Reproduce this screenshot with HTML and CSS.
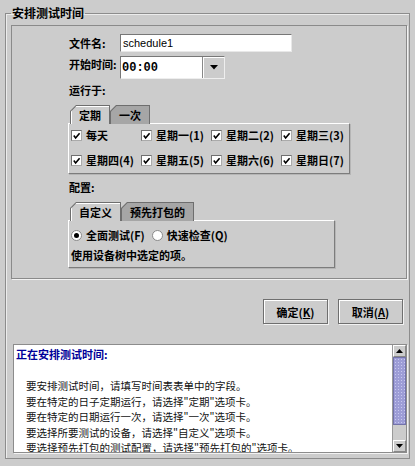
FILE: index.html
```html
<!DOCTYPE html>
<html lang="zh-CN">

<head>
    <meta charset="UTF-8">
    <title>安排测试时间</title>
    <link rel="stylesheet" href="styles.css">
</head>

<body>
    <fieldset class="group">
        <legend>安排测试时间</legend>

        <div class="main">
            <div class="form">
                <div class="row">
                    <label class="label" for="fileName">文件名:</label>
                    <input id="fileName" class="text-field" type="text" value="schedule1">
                </div>
                <div class="row row-time">
                    <label class="label">开始时间:</label>
                    <div class="combo">
                        <span class="combo-value">00:00</span>
                        <span class="combo-button">
                            <svg width="8" height="5" viewBox="0 0 8 5"><path d="M0 0 H8 L4 4.5 Z" fill="#000"/></svg>
                        </span>
                    </div>
                </div>

                <div class="section-label">运行于:</div>
                <div class="tabs">
                    <div class="tab selected"><div class="tab-face">定期</div></div>
                    <div class="tab"><div class="tab-face">一次</div></div>
                </div>
                <div class="tab-panel days">
                    <div class="check-item"><span class="check"><svg width="9" height="9" viewBox="0 0 9 9"><path d="M1.8 4.6 L3.6 7 L7.6 2.2" fill="none" stroke="#000" stroke-width="1.6"/></svg></span>每天</div>
                    <div class="check-item"><span class="check"><svg width="9" height="9" viewBox="0 0 9 9"><path d="M1.8 4.6 L3.6 7 L7.6 2.2" fill="none" stroke="#000" stroke-width="1.6"/></svg></span>星期一(1)</div>
                    <div class="check-item"><span class="check"><svg width="9" height="9" viewBox="0 0 9 9"><path d="M1.8 4.6 L3.6 7 L7.6 2.2" fill="none" stroke="#000" stroke-width="1.6"/></svg></span>星期二(2)</div>
                    <div class="check-item"><span class="check"><svg width="9" height="9" viewBox="0 0 9 9"><path d="M1.8 4.6 L3.6 7 L7.6 2.2" fill="none" stroke="#000" stroke-width="1.6"/></svg></span>星期三(3)</div>
                    <div class="check-item"><span class="check"><svg width="9" height="9" viewBox="0 0 9 9"><path d="M1.8 4.6 L3.6 7 L7.6 2.2" fill="none" stroke="#000" stroke-width="1.6"/></svg></span>星期四(4)</div>
                    <div class="check-item"><span class="check"><svg width="9" height="9" viewBox="0 0 9 9"><path d="M1.8 4.6 L3.6 7 L7.6 2.2" fill="none" stroke="#000" stroke-width="1.6"/></svg></span>星期五(5)</div>
                    <div class="check-item"><span class="check"><svg width="9" height="9" viewBox="0 0 9 9"><path d="M1.8 4.6 L3.6 7 L7.6 2.2" fill="none" stroke="#000" stroke-width="1.6"/></svg></span>星期六(6)</div>
                    <div class="check-item"><span class="check"><svg width="9" height="9" viewBox="0 0 9 9"><path d="M1.8 4.6 L3.6 7 L7.6 2.2" fill="none" stroke="#000" stroke-width="1.6"/></svg></span>星期日(7)</div>
                </div>

                <div class="section-label section-config">配置:</div>
                <div class="tabs">
                    <div class="tab selected"><div class="tab-face">自定义</div></div>
                    <div class="tab"><div class="tab-face">预先打包的</div></div>
                </div>
                <div class="tab-panel config">
                    <div class="radio-row">
                        <div class="radio-item"><span class="radio on"></span>全面测试(F)</div>
                        <div class="radio-item"><span class="radio"></span>快速检查(Q)</div>
                    </div>
                    <div class="config-note">使用设备树中选定的项。</div>
                </div>
            </div>
        </div>

        <div class="buttons">
            <button type="button" class="button">确定(<u>K</u>)</button>
            <button type="button" class="button">取消(<u>A</u>)</button>
        </div>

        <div class="help">
            <div class="help-text">
                <p class="help-title">正在安排测试时间:</p>
                <p>&nbsp;</p>
                <p class="help-line">要安排测试时间，请填写时间表表单中的字段。</p>
                <p class="help-line">要在特定的日子定期运行，请选择"定期"选项卡。</p>
                <p class="help-line">要在特定的日期运行一次，请选择"一次"选项卡。</p>
                <p class="help-line">要选择所要测试的设备，请选择"自定义"选项卡。</p>
                <p class="help-line">要选择预先打包的测试配置，请选择"预先打包的"选项卡。</p>
            </div>
            <div class="scrollbar">
                <div class="scroll-btn">
                    <svg width="7" height="4" viewBox="0 0 7 4"><path d="M0 4 H7 L3.5 0 Z" fill="#000"/></svg>
                </div>
                <div class="scroll-track">
                    <div class="scroll-thumb"></div>
                </div>
                <div class="scroll-btn">
                    <svg width="7" height="4" viewBox="0 0 7 4"><path d="M0 0 H7 L3.5 4 Z" fill="#000"/></svg>
                </div>
            </div>
        </div>
    </fieldset>
</body>

</html>
```

FILE: styles.css
```css
body {
    margin: 0;
    padding: 6px 0 0 0;
    width: 415px;
    height: 466px;
    box-sizing: border-box;
    overflow: hidden;
    background-color: #cccccc;
    font-family: "Noto Sans CJK SC", "Liberation Sans", sans-serif;
    color: #000;
}

.group {
    margin: 0 5px;
    padding: 5px 2px 5px 5px;
    border: 1px solid #8c8c8c;
    box-shadow: inset 1px 1px 0 #ececec;
}

.group legend {
    padding: 0 1px;
    font-size: 12px;
    line-height: 14px;
    font-weight: bold;
}

.main {
    height: 254px;
    box-sizing: border-box;
    padding: 8px 0 0 56px;
    border: 1px solid #8a8a8a;
    box-shadow: 1px 1px 0 #f2f2f2;
}

.form {
    display: flex;
    flex-direction: column;
    align-items: flex-start;
    font-size: 11px;
    font-weight: bold;
}

.row {
    display: flex;
    align-items: center;
    height: 18px;
}

.row-time {
    height: 23px;
    margin-top: 4px;
    align-items: flex-start;
}

.row-time .label {
    margin-top: 1px;
}

.label {
    width: 51px;
    line-height: 14px;
    padding-left: 1px;
}

.text-field {
    width: 172px;
    height: 18px;
    box-sizing: border-box;
    margin: 0;
    padding: 0 2px;
    border: 1px solid #777;
    border-right-color: #e8e8e8;
    border-bottom-color: #e8e8e8;
    background: #fff;
    font-family: "Liberation Sans", sans-serif;
    font-size: 11px;
    color: #000;
    outline: none;
}

.combo {
    display: flex;
    width: 105px;
    height: 23px;
    box-sizing: border-box;
    border: 1px solid #777;
    border-right-color: #eee;
    border-bottom-color: #eee;
    background: #fff;
}

.combo-value {
    flex: 1;
    display: flex;
    align-items: center;
    padding-left: 1px;
    font-family: "Liberation Mono", monospace;
    font-size: 12px;
    font-weight: bold;
}

.combo-button {
    width: 21px;
    display: flex;
    align-items: center;
    justify-content: center;
    background: #cccccc;
    border-left: 1px solid #888;
    box-shadow: inset 1px 1px 0 #fff;
}

.section-label {
    margin-top: 4px;
    line-height: 14px;
    padding-left: 1px;
}

.section-config {
    margin-top: 6px;
}

.tabs {
    display: flex;
    margin: 8px 0 -1px 2px;
    position: relative;
    z-index: 1;
}

.tab {
    height: 19px;
    box-sizing: border-box;
    padding: 1px 1px 0 1px;
    background: #6e6e6e;
    clip-path: polygon(0 6px, 6px 0, 100% 0, 100% 100%, 0 100%);
}

.tab-face {
    height: 100%;
    padding: 0 8px;
    display: flex;
    align-items: center;
    background: #a6a6a6;
    clip-path: polygon(0 5.5px, 5.5px 0, 100% 0, 100% 100%, 0 100%);
}

.tab.selected .tab-face {
    background: #cccccc;
    box-shadow: inset 1px 1px 0 #fff;
}

.tab-panel {
    box-sizing: border-box;
    border: 1px solid #fff;
    border-right-color: #7c7c7c;
    border-bottom-color: #7c7c7c;
    box-shadow: 1px 1px 0 #b5b5b5;
}

.days {
    width: 282px;
    padding: 0 0 2px 2px;
    display: grid;
    grid-template-columns: repeat(4, 70px);
    grid-auto-rows: 22px;
    row-gap: 3px;
}

.check-item {
    display: flex;
    align-items: center;
    gap: 4px;
    white-space: nowrap;
}

.check {
    width: 11px;
    height: 11px;
    box-sizing: border-box;
    border: 1px solid #707070;
    border-right-color: #aaa;
    border-bottom-color: #aaa;
    background: #fff;
    display: flex;
    align-items: center;
    justify-content: center;
    flex-shrink: 0;
}

.config {
    width: 267px;
    padding: 4px 0 5px 2px;
}

.radio-row {
    display: flex;
    align-items: center;
    gap: 7px;
    height: 20px;
}

.radio-item {
    display: flex;
    align-items: center;
    gap: 4px;
}

.radio {
    width: 11px;
    height: 11px;
    box-sizing: border-box;
    border-radius: 50%;
    border: 1px solid #8a8a8a;
    background: #fff;
    display: flex;
    align-items: center;
    justify-content: center;
}

.radio.on::after {
    content: "";
    width: 5px;
    height: 5px;
    border-radius: 50%;
    background: #000;
}

.config-note {
    margin-top: 3px;
    line-height: 14px;
}

.buttons {
    display: flex;
    justify-content: flex-end;
    gap: 10px;
    margin: 20px 4px 0 0;
}

.button {
    width: 65px;
    height: 25px;
    margin: 0;
    padding: 0;
    background: #cccccc;
    border: 1px solid #6f6f6f;
    box-shadow: inset 1px 1px 0 #fff, 1px 1px 0 #f2f2f2;
    font-family: "Noto Sans CJK SC", sans-serif;
    font-size: 11px;
    font-weight: bold;
    color: #000;
}

.help {
    display: flex;
    height: 107px;
    margin: 20px 0 0 2px;
    border: 1px solid #8c8c8c;
    box-shadow: 1px 1px 0 #f2f2f2;
    background: #fff;
}

.help-text {
    flex: 1;
    overflow: hidden;
    padding: 2px 0 0 2px;
    font-size: 10.5px;
    line-height: 15.5px;
    white-space: nowrap;
}

.help-text p {
    margin: 0;
}

.help-title {
    font-size: 11px;
    font-weight: bold;
    color: #000099;
}

.help-line {
    padding-left: 10px;
    color: #111;
}

.scrollbar {
    width: 13px;
    display: flex;
    flex-direction: column;
    background: #cccccc;
    border-left: 1px solid #999;
}

.scroll-btn {
    height: 12px;
    box-sizing: border-box;
    display: flex;
    align-items: center;
    justify-content: center;
    border: 1px solid #fff;
    border-right-color: #888;
    border-bottom-color: #888;
}

.scroll-track {
    flex: 1;
    padding-bottom: 15px;
    display: flex;
}

.scroll-thumb {
    flex: 1;
    box-sizing: border-box;
    border: 1px solid #7272aa;
    background-color: #9d9dd6;
    background-image: radial-gradient(circle, #c8c8f0 0.6px, transparent 0.9px);
    background-size: 3px 3px;
}
```
